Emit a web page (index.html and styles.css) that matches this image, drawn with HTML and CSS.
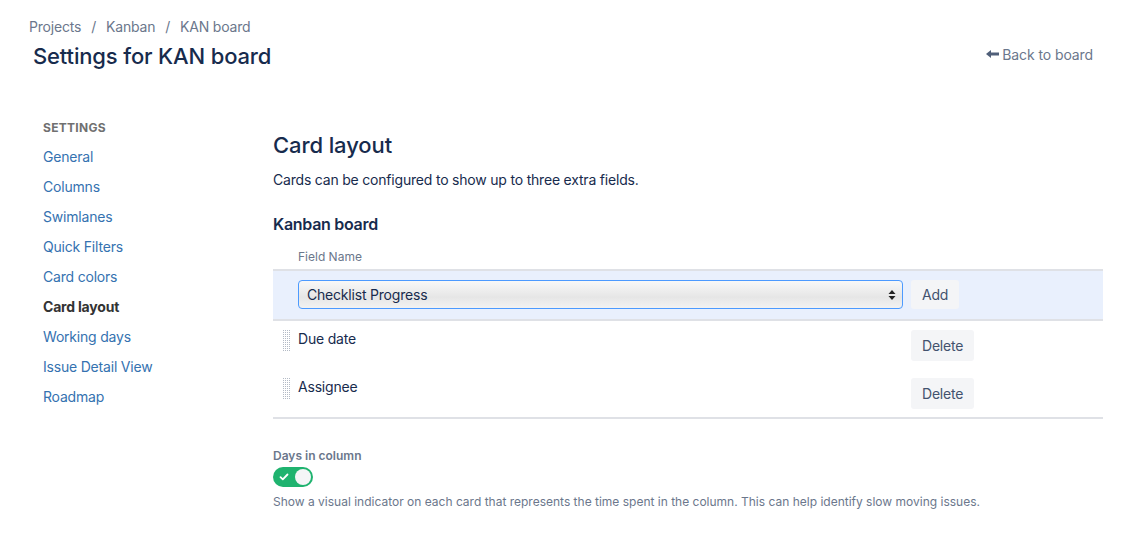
FILE: index.html
```html
<!DOCTYPE html>
<html>
<head>
<meta charset="utf-8">
<link rel="stylesheet" href="styles.css">
</head>
<body>
<header class="page-header">
  <nav class="breadcrumbs">
    <a>Projects</a><span class="sep">/</span><a>Kanban</a><span class="sep">/</span><a>KAN board</a>
  </nav>
  <div class="title-row">
    <h1 class="page-title">Settings for KAN board</h1>
    <a class="back-link">
      <svg class="back-icon" width="14" height="8" viewBox="0 0 14 8"><polygon points="0,4 5,0 5,8" fill="#505f79"/><rect x="4" y="2.5" width="9" height="3" fill="#505f79"/></svg>Back to board
    </a>
  </div>
</header>
<div class="layout">
  <aside class="sidebar">
    <div class="side-heading">SETTINGS</div>
    <ul class="side-nav">
      <li><a>General</a></li>
      <li><a>Columns</a></li>
      <li><a>Swimlanes</a></li>
      <li><a>Quick Filters</a></li>
      <li><a>Card colors</a></li>
      <li><a class="active">Card layout</a></li>
      <li><a>Working days</a></li>
      <li><a>Issue Detail View</a></li>
      <li><a>Roadmap</a></li>
    </ul>
  </aside>
  <main class="content">
    <h2 class="section-title">Card layout</h2>
    <p class="intro">Cards can be configured to show up to three extra fields.</p>
    <h3 class="sub-title">Kanban board</h3>
    <div class="col-label">Field Name</div>
    <div class="fields">
      <div class="row add-row">
        <div class="select"><span>Checklist Progress</span>
          <svg width="8" height="12" viewBox="0 0 8 12"><polygon points="4,1 7.5,5 0.5,5" fill="#222"/><polygon points="4,11 7.5,7 0.5,7" fill="#222"/></svg>
        </div>
        <button class="btn">Add</button>
      </div>
      <div class="row field-row">
        <span class="grip"></span>
        <span class="field-name">Due date</span>
        <button class="btn">Delete</button>
      </div>
      <div class="row field-row">
        <span class="grip"></span>
        <span class="field-name">Assignee</span>
        <button class="btn">Delete</button>
      </div>
    </div>
    <div class="toggle-block">
      <div class="toggle-label">Days in column</div>
      <div class="toggle">
        <svg class="check" width="10" height="8" viewBox="0 0 10 8"><path d="M1.5 4.2 L3.8 6.3 L8.5 1.5" stroke="#fff" stroke-width="1.8" fill="none" stroke-linecap="round" stroke-linejoin="round"/></svg>
        <span class="knob"></span>
      </div>
      <p class="toggle-desc">Show a visual indicator on each card that represents the time spent in the column. This can help identify slow moving issues.</p>
    </div>
  </main>
</div>
</body>
</html>
```
FILE: styles.css
```css
* { box-sizing: border-box; }
body {
  margin: 0;
  font-family: Inter, "Noto Sans", "Liberation Sans", sans-serif;
  color: #172b4d;
  background: #fff;
}
a { cursor: pointer; }
.page-header {
  padding: 17px 40px 0 29px;
}
.breadcrumbs {
  font-size: 14px;
  line-height: 20px;
  color: #6b778c;
  letter-spacing: -0.2px;
}
.breadcrumbs .sep { margin: 0 10px; }
.title-row {
  display: flex;
  justify-content: space-between;
  align-items: center;
  margin-top: 5px;
}
.page-title {
  margin: 0 0 0 4px;
  font-size: 22px;
  line-height: 28px;
  font-weight: 500;
  color: #172b4d;
  letter-spacing: -0.15px;
}
.back-link {
  display: flex;
  align-items: center;
  font-size: 14px;
  color: #6b778c;
  margin-top: -4px;
  letter-spacing: -0.1px;
}
.back-icon { margin-right: 2px; }
.layout {
  display: flex;
  padding: 50px 30px 0 43px;
}
.sidebar {
  width: 230px;
  flex: none;
}
.side-heading {
  font-size: 12px;
  line-height: 16px;
  font-weight: 700;
  color: #707070;
  letter-spacing: 0.3px;
}
.side-nav {
  list-style: none;
  margin: 6px 0 0;
  padding: 0;
}
.side-nav li {
  font-size: 14px;
  line-height: 30px;
  letter-spacing: -0.2px;
}
.side-nav a { color: #3572b0; }
.side-nav a.active { color: #333; font-weight: 700; }
.content { flex: 1; padding-top: 11px; }
.section-title {
  margin: 0;
  font-size: 22px;
  line-height: 28px;
  font-weight: 500;
  letter-spacing: -0.1px;
}
.intro {
  margin: 11px 0 0;
  font-size: 14px;
  line-height: 20px;
  letter-spacing: -0.2px;
}
.sub-title {
  margin: 24px 0 0;
  font-size: 16px;
  line-height: 20px;
  font-weight: 600;
  letter-spacing: -0.3px;
}
.col-label {
  margin: 15px 0 0 25px;
  font-size: 12px;
  line-height: 16px;
  color: #6b778c;
}
.fields {
  margin-top: 4px;
  border-top: 2px solid #dfe1e6;
  border-bottom: 2px solid #dfe1e6;
}
.row {
  display: flex;
  align-items: center;
}
.add-row {
  background: #e9f0fd;
  border-bottom: 2px solid #dfe1e6;
  padding: 0 0 1px 25px;
  height: 50px;
}
.select {
  width: 605px;
  height: 29px;
  border: 1px solid #4c9aff;
  border-radius: 4px;
  background: linear-gradient(#f8f8f8, #e6e6e6 60%, #f2f2f2);
  display: flex;
  align-items: center;
  justify-content: space-between;
  padding: 0 6px 0 8px;
  font-size: 14px;
  color: #172b4d;
  letter-spacing: -0.2px;
}
.btn {
  font-family: inherit;
  font-size: 14px;
  color: #42526e;
  background: #f4f5f7;
  border: none;
  border-radius: 3px;
  height: 29px;
  padding: 0 11px;
  margin-left: 8px;
  letter-spacing: -0.2px;
}
.field-row {
  height: 48px;
  padding-left: 10px;
}
.grip {
  align-self: flex-start;
  margin-top: 9px;
  width: 7px;
  height: 21px;
  background-color: #b3bac5;
  background-image: linear-gradient(90deg, transparent 1px, #fff 1px), linear-gradient(transparent 1px, #fff 1px);
  background-size: 2px 2px;
}
.field-name {
  margin-left: 8px;
  width: 604px;
  font-size: 14px;
  color: #172b4d;
  align-self: flex-start;
  padding-top: 9px;
  letter-spacing: -0.2px;
}
.field-row .btn { margin-left: 9px; height: 31px; padding: 0 11px; }
.toggle-block { margin-top: 29px; }
.toggle-label {
  font-size: 12px;
  line-height: 16px;
  font-weight: 600;
  color: #6b778c;
}
.toggle {
  position: relative;
  margin-top: 3px;
  width: 40px;
  height: 20px;
  border-radius: 10px;
  background: #1fb36f;
}
.toggle .check {
  position: absolute;
  left: 6px;
  top: 6px;
}
.toggle .knob {
  position: absolute;
  right: 2px;
  top: 2px;
  width: 16px;
  height: 16px;
  border-radius: 50%;
  background: #f4f5f7;
}
.toggle-desc {
  margin: 6px 0 0;
  font-size: 12px;
  line-height: 18px;
  color: #6b778c;
}
```
